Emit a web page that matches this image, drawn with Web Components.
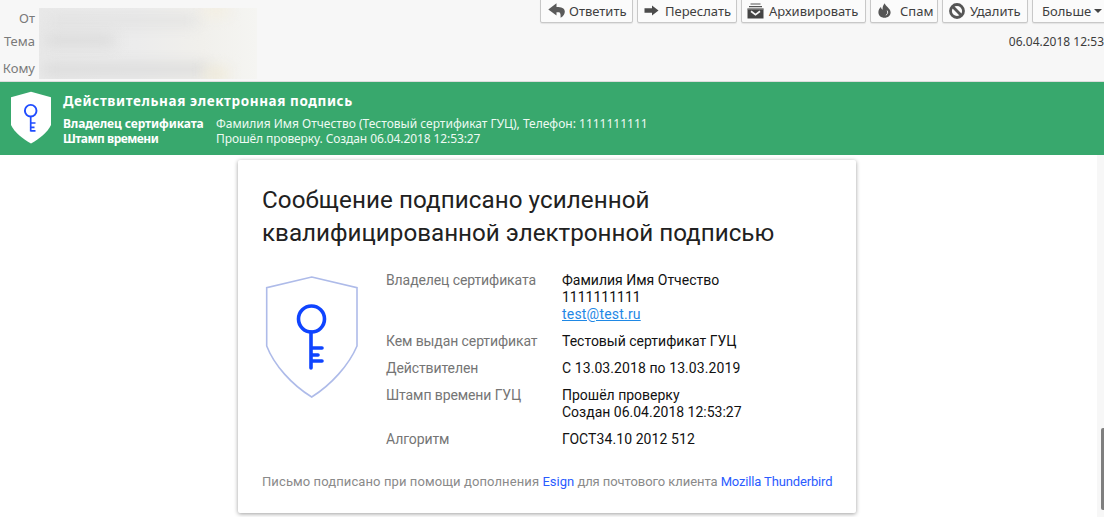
<!DOCTYPE html>
<html>
<head>
<meta charset="utf-8">
<title>Esign</title>
<style>
  html, body { margin: 0; height: 517px; overflow: hidden; background: #fff; }
  body { display: flex; flex-direction: column; }
</style>
</head>
<body>
<mail-header>
  <tool-button slot="tools" label="Ответить" icon="reply" w="93" pad="7" gap="4"></tool-button>
  <tool-button slot="tools" label="Переслать" icon="forward" w="100" pad="6" gap="6"></tool-button>
  <tool-button slot="tools" label="Архивировать" icon="archive" w="125" pad="5" gap="5"></tool-button>
  <tool-button slot="tools" label="Спам" icon="spam" w="68" pad="7" gap="9"></tool-button>
  <tool-button slot="tools" label="Удалить" icon="delete" w="86" pad="6" gap="5"></tool-button>
  <tool-button slot="tools" label="Больше" icon="more" w="80" pad="9" gap="4"></tool-button>
</mail-header>
<sign-banner></sign-banner>
<mail-body>
  <sign-card></sign-card>
</mail-body>

<script>
const ICONS = {
  reply: `<svg width="17" height="15" viewBox="0 0 17 15"><path fill="#5a5a5a" d="M8.5 0.2 L0.3 6.6 L8.5 12.6 V9.2 H10.5 C12.2 9.2 12.8 10.6 12.6 14.8 C15.6 13 17 10.5 16.8 8.2 C16.5 5.2 13.5 4 8.5 4 Z"/></svg>`,
  forward: `<svg width="15" height="12" viewBox="0 0 15 12"><path fill="#4c4c4c" d="M8 0.5 L14.5 5.5 L8 10.5 V7.7 H0.5 V3.3 H8 Z"/></svg>`,
  archive: `<svg width="17" height="16" viewBox="0 0 17 16"><path fill="#555" d="M3.5 0.4 H13.5 V1.4 H3.5 Z M2 3 H15 V4.2 H2 Z"/><path fill="#444" d="M0.5 5.5 H16.5 V15.5 H0.5 Z"/><path fill="#8a8a8a" d="M0.5 5.5 H16.5 V6.6 H0.5 Z"/><path fill="none" stroke="#f4f4f4" stroke-width="1.7" d="M4 8.2 L8.5 11.6 L13 8.2"/></svg>`,
  spam: `<svg width="13" height="15" viewBox="0 0 13 15"><path fill="#555" d="M6.8 0.3 C7 3 12.6 5.4 12.6 9.2 C12.6 12.5 10 14.7 6.5 14.7 C3 14.7 0.4 12.5 0.4 9.2 C0.4 7.2 1.4 5.3 3 4 C3.2 5.4 3.7 6.3 4.6 6.8 C4.4 4.4 5 2.2 6.8 0.3 Z"/><path fill="none" stroke="#e8e8e8" stroke-width="1" d="M9.2 7.6 C10.2 9.4 9.6 11.4 7.8 12.2"/></svg>`,
  delete: `<svg width="16" height="16" viewBox="0 0 16 16"><circle cx="8" cy="8" r="6.5" fill="none" stroke="#555" stroke-width="2.8"/><path d="M3.6 3.6 L12.4 12.4" stroke="#555" stroke-width="2.8"/></svg>`,
  more: ``
};

class ToolButton extends HTMLElement {
  constructor() {
    super();
    const shadow = this.attachShadow({mode: 'open'});
    const name = this.getAttribute('icon');
    shadow.innerHTML = `
    <style>
      :host { display: block; flex: none; }
      .btn {
        display: flex; align-items: center;
        width: ${this.getAttribute('w')}px;
        gap: ${this.getAttribute('gap')}px;
        padding-left: ${this.getAttribute('pad')}px;
        height: 25px; box-sizing: border-box; margin-top: -2px;
        background: #fbfbfb; border: 1px solid #c8c8c8; border-radius: 2px;
        box-shadow: 0 1px 1px rgba(0,0,0,.08);
        font: 13px "Noto Sans", sans-serif; color: #3f3f3f; white-space: nowrap;
      }
      svg { display: block; flex: none; }
      .caret { width: 0; height: 0; border: 4px solid transparent; border-top: 4px solid #444; border-bottom: 0; margin-left: -1px; }
    </style>
    <div class="btn">${ICONS[name]}<span>${this.getAttribute('label')}</span>${name === 'more' ? '<i class="caret"></i>' : ''}</div>`;
  }
}
customElements.define('tool-button', ToolButton);

class MailHeader extends HTMLElement {
  constructor() {
    super();
    const shadow = this.attachShadow({mode: 'open'});
    shadow.innerHTML = `
    <style>
      :host {
        display: flex; flex: none; height: 82px; box-sizing: border-box;
        background: #f7f7f7; border-bottom: 1px solid #dcdcdc;
        font: 13px "Noto Sans", sans-serif; color: #7a7a7a;
        overflow: hidden;
      }
      .labels { flex: none; width: 35px; padding-top: 8px; display: flex; flex-direction: column; align-items: flex-end; }
      .labels span { height: 23px; line-height: 20px; }
      .labels span:nth-child(2) { height: 27px; }
      .blur {
        flex: none; width: 218px; height: 71px; margin: 8px 0 0 4px;
        background: linear-gradient(90deg, #e9e9e9 0, #ececec 45%, #f1f0ec 75%, #f5f5f2 100%);
        overflow: hidden; position: relative;
      }
      .blur i { display: block; position: absolute; filter: blur(7px); }
      .right { flex: 1; min-width: 0; display: flex; flex-direction: column; align-items: flex-end; }
      .tools { display: flex; gap: 4px; margin-right: -8px; }
      .date { margin-top: 10px; color: #3c3c3c; font-size: 12px; line-height: 18px; }
    </style>
    <div class="labels"><span>От</span><span>Тема</span><span>Кому</span></div>
    <div class="blur">
      <i style="left:8px;top:8px;width:150px;height:9px;background:#e0e0e0"></i>
      <i style="left:6px;top:28px;width:70px;height:9px;background:#d6d6d6"></i>
      <i style="left:4px;top:56px;width:165px;height:11px;background:#d9d9d9"></i>
      <i style="left:165px;top:-4px;width:24px;height:12px;background:#f3eee0"></i>
      <i style="left:165px;top:60px;width:24px;height:12px;background:#efe9d6"></i>
    </div>
    <div class="right">
      <div class="tools"><slot name="tools"></slot></div>
      <div class="date">06.04.2018 12:53</div>
    </div>`;
  }
}
customElements.define('mail-header', MailHeader);

class SignBanner extends HTMLElement {
  constructor() {
    super();
    const shadow = this.attachShadow({mode: 'open'});
    shadow.innerHTML = `
    <style>
      :host {
        display: flex; flex: none; height: 73px; box-sizing: border-box;
        background: #38a86d; color: #fff; padding: 9px 0 0 11px;
        font: 12px/15px "Noto Sans", sans-serif;
      }
      svg { flex: none; display: block; width: 40px; height: 53px; }
      .text { margin-left: 12px; }
      h1 { margin: 2px 0 6px; font-size: 13.5px; line-height: 17px; font-weight: 700; letter-spacing: .6px; }
      .row { display: flex; }
      b { width: 153px; flex: none; font-weight: 700; letter-spacing: -.1px; }
      .row + .row b { letter-spacing: -.5px; }
      .row + .row span { letter-spacing: -.1px; }
      span { color: #eefaf3; }
    </style>
    <svg viewBox="0 0 40 53">
      <path fill="#fff" d="M20 .7 L40 6.3 V34 C37 41 28 48 20 52.5 C12 48 3 41 0 34 V6.3 Z"/>
      <circle cx="19.7" cy="19.7" r="5.8" fill="none" stroke="#1f4cff" stroke-width="1.9"/>
      <path d="M19.7 25.5 V40.6 M19.7 32 H24.5 M19.7 36.3 H23.5 M19.7 39.8 H24.5" fill="none" stroke="#1f4cff" stroke-width="1.7"/>
    </svg>
    <div class="text">
      <h1>Действительная электронная подпись</h1>
      <div class="row"><b>Владелец сертификата</b><span>Фамилия Имя Отчество (Тестовый сертификат ГУЦ), Телефон: 1111111111</span></div>
      <div class="row"><b>Штамп времени</b><span>Прошёл проверку. Создан 06.04.2018 12:53:27</span></div>
    </div>`;
  }
}
customElements.define('sign-banner', SignBanner);

class InfoRow extends HTMLElement {
  constructor() {
    super();
    const shadow = this.attachShadow({mode: 'open'});
    shadow.innerHTML = `
    <style>
      :host { display: flex; margin-bottom: 10px; }
      .k { width: 176px; flex: none; color: #757575; letter-spacing: -.1px; }
      .v { color: #111; }
    </style>
    <div class="k">${this.getAttribute('label')}</div>
    <div class="v"><slot></slot></div>`;
  }
}
customElements.define('info-row', InfoRow);

class SignCard extends HTMLElement {
  constructor() {
    super();
    const shadow = this.attachShadow({mode: 'open'});
    shadow.innerHTML = `
    <style>
      :host {
        display: block; width: 618px; height: 353px; box-sizing: border-box;
        background: #fff; padding: 24px 24px 0;
        box-shadow: 0 1px 4px rgba(0,0,0,.38);
        border-radius: 2px;
        font: 14px/17px Roboto, sans-serif;
      }
      h2 { margin: 0; font-size: 24.2px; line-height: 33px; font-weight: 400; color: #212121; }
      h2 span { letter-spacing: .07px; }
      .main { display: flex; margin-top: 22px; }
      svg { flex: none; display: block; width: 96px; height: 124px; margin: 3px 0 0 3px; }
      .rows { margin-left: 25px; }
      a { color: #1f88e5; letter-spacing: .2px; }
      .wide { letter-spacing: .08px; }
      footer { margin-top: 15px; font-size: 13px; color: #8a8a8a; white-space: nowrap; }
      footer .lead { letter-spacing: .1px; }
      footer .mid { letter-spacing: -.07px; }
      footer a { color: #2a5cff; text-decoration: none; letter-spacing: 0; }
      footer a:last-child { letter-spacing: -.15px; }
    </style>
    <h2><span>Сообщение подписано усиленной</span><br>квалифицированной электронной подписью</h2>
    <div class="main">
      <svg viewBox="0 0 96 124">
        <path fill="#fff" stroke="#aebbe9" stroke-width="1.6" d="M46.7 2 L92 12.7 V71 C84 90 66 110 46.7 122 C27 110 9 90 1.7 71 V12.7 Z"/>
        <circle cx="46.5" cy="44" r="13" fill="none" stroke="#0f44ff" stroke-width="3.6"/>
        <path d="M46 57 V93 M46 73 H57 M46 80 H53 M46 86 H57" fill="none" stroke="#0f44ff" stroke-width="3.6" stroke-linecap="round"/>
      </svg>
      <div class="rows">
        <info-row label="Владелец сертификата">Фамилия Имя Отчество<br>1111111111<br><a href="#">test@test.ru</a></info-row>
        <info-row label="Кем выдан сертификат">Тестовый сертификат ГУЦ</info-row>
        <info-row label="Действителен"><span class="wide">С 13.03.2018 по 13.03.2019</span></info-row>
        <info-row label="Штамп времени ГУЦ">Прошёл проверку<br>Создан 06.04.2018 12:53:27</info-row>
        <info-row label="Алгоритм"><span class="wide">ГОСТ34.10 2012 512</span></info-row>
      </div>
    </div>
    <footer><span class="lead">Письмо подписано при помощи дополнения </span><a href="#">Esign</a><span class="mid"> для почтового клиента </span><a href="#">Mozilla Thunderbird</a></footer>`;
  }
}
customElements.define('sign-card', SignCard);

class MailBody extends HTMLElement {
  constructor() {
    super();
    const shadow = this.attachShadow({mode: 'open'});
    shadow.innerHTML = `
    <style>
      :host { display: flex; flex: 1; min-height: 0; position: relative; background: #fff; }
      .page { flex: 1; min-width: 0; padding: 5px 0 0 238px; }
      .gutter { flex: none; width: 7px; background: #f7f7f7; }
      .thumb { position: absolute; right: 0; top: 273px; width: 3px; height: 82px; background: #7f7f7f; border-radius: 2px 0 0 2px; }
    </style>
    <div class="page"><slot></slot></div>
    <div class="gutter"></div>
    <div class="thumb"></div>`;
  }
}
customElements.define('mail-body', MailBody);
</script>
</body>
</html>
